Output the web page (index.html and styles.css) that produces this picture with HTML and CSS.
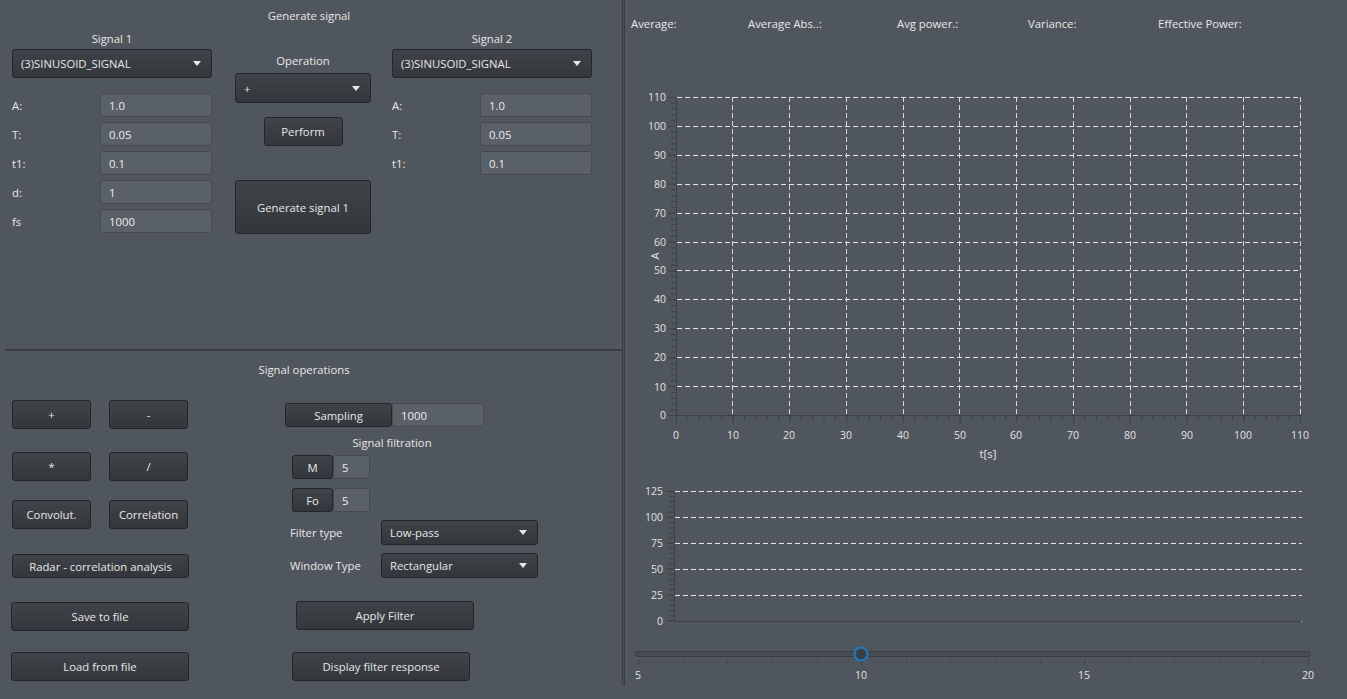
FILE: index.html
```html
<!DOCTYPE html>
<html>
<head>
<meta charset="utf-8">
<link rel="stylesheet" href="styles.css">
</head>
<body>
<div class="app">
  <div class="left">
    <section class="gen">
      <div class="title gen-title">Generate signal</div>
      <div class="gen-cols">
        <div class="sigcol">
          <div class="collabel">Signal 1</div>
          <div class="combo sigcombo"><span>(3)SINUSOID_SIGNAL</span><i class="arrow"></i></div>
          <div class="params">
            <div class="param"><span class="plabel">A:</span><div class="field">1.0</div></div>
            <div class="param"><span class="plabel">T:</span><div class="field">0.05</div></div>
            <div class="param"><span class="plabel">t1:</span><div class="field">0.1</div></div>
            <div class="param"><span class="plabel">d:</span><div class="field">1</div></div>
            <div class="param"><span class="plabel">fs</span><div class="field">1000</div></div>
          </div>
        </div>
        <div class="opcol">
          <div class="collabel oplabel">Operation</div>
          <div class="combo opcombo"><span>+</span><i class="arrow"></i></div>
          <div class="btn perform">Perform</div>
          <div class="btn generate">Generate signal 1</div>
        </div>
        <div class="sigcol sig2">
          <div class="collabel">Signal 2</div>
          <div class="combo sigcombo"><span>(3)SINUSOID_SIGNAL</span><i class="arrow"></i></div>
          <div class="params">
            <div class="param"><span class="plabel">A:</span><div class="field">1.0</div></div>
            <div class="param"><span class="plabel">T:</span><div class="field">0.05</div></div>
            <div class="param"><span class="plabel">t1:</span><div class="field">0.1</div></div>
          </div>
        </div>
      </div>
    </section>
    <div class="hr"></div>
    <section class="ops">
      <div class="title ops-title">Signal operations</div>
      <div class="ops-cols">
        <div class="opsleft">
          <div class="pair r1"><div class="btn small">+</div><div class="btn small">-</div></div>
          <div class="pair r2"><div class="btn small">*</div><div class="btn small">/</div></div>
          <div class="pair r3"><div class="btn small">Convolut.</div><div class="btn small">Correlation</div></div>
          <div class="btn radar">Radar - correlation analysis</div>
          <div class="btn file save">Save to file</div>
          <div class="btn file load">Load from file</div>
        </div>
        <div class="opsright">
          <div class="samp"><div class="btn sampbtn">Sampling</div><div class="field sampfield">1000</div></div>
          <div class="filt-title">Signal filtration</div>
          <div class="mrow mrow1"><div class="btn mbtn">M</div><div class="field mfield">5</div></div>
          <div class="mrow mrow2"><div class="btn mbtn">Fo</div><div class="field mfield">5</div></div>
          <div class="ftrow ft1"><span class="ftlabel">Filter type</span><div class="combo ftcombo"><span>Low-pass</span><i class="arrow"></i></div></div>
          <div class="ftrow ft2"><span class="ftlabel">Window Type</span><div class="combo ftcombo"><span>Rectangular</span><i class="arrow"></i></div></div>
          <div class="btn apply">Apply Filter</div>
          <div class="btn display">Display filter response</div>
        </div>
      </div>
    </section>
  </div>
  <div class="divider"></div>
  <div class="right">
    <div class="stats">
      <span>Average:</span>
      <span>Average Abs..:</span>
      <span>Avg power.:</span>
      <span>Variance:</span>
      <span>Effective Power:</span>
    </div>
    <svg class="charts" width="722" height="636" viewBox="625 50 722 636" xmlns="http://www.w3.org/2000/svg">
      <!-- chart 1 grid -->
      <g class="grid">
        <path d="M677 97.5H1301M677 126.5H1301M677 155.5H1301M677 184.5H1301M677 213.5H1301M677 242.5H1301M677 270.5H1301M677 299.5H1301M677 328.5H1301M677 357.5H1301M677 386.5H1301"/>
        <path class="vgrid" d="M732.5 97V415M789.5 97V415M846.5 97V415M903.5 97V415M959.5 97V415M1016.5 97V415M1073.5 97V415M1130.5 97V415M1186.5 97V415M1243.5 97V415M1300.5 97V415"/>
      </g>
      <g class="axis">
        <path d="M676.5 97V416M676 415.5H1301"/>
        <line x1="672" y1="97" x2="672" y2="417" stroke-width="8" stroke-dasharray="1 27.909"/>
        <line x1="673.5" y1="97" x2="673.5" y2="417" stroke-width="5" stroke-dasharray="1 4.782"/>
        <line x1="676" y1="419" x2="1302" y2="419" stroke-width="8" stroke-dasharray="1 55.727"/>
        <line x1="676" y1="417.5" x2="1302" y2="417.5" stroke-width="5" stroke-dasharray="1 10.345"/>
      </g>
      <g class="ticklabels ylab">
        <text x="666" y="101">110</text>
        <text x="666" y="130">100</text>
        <text x="666" y="159">90</text>
        <text x="666" y="188">80</text>
        <text x="666" y="217">70</text>
        <text x="666" y="246">60</text>
        <text x="666" y="274">50</text>
        <text x="666" y="303">40</text>
        <text x="666" y="332">30</text>
        <text x="666" y="361">20</text>
        <text x="666" y="391">10</text>
        <text x="666" y="419">0</text>
      </g>
      <g class="ticklabels xlab">
        <text x="676" y="439">0</text>
        <text x="733" y="439">10</text>
        <text x="789" y="439">20</text>
        <text x="846" y="439">30</text>
        <text x="903" y="439">40</text>
        <text x="960" y="439">50</text>
        <text x="1016" y="439">60</text>
        <text x="1073" y="439">70</text>
        <text x="1130" y="439">80</text>
        <text x="1187" y="439">90</text>
        <text x="1243" y="439">100</text>
        <text x="1300" y="439">110</text>
      </g>
      <text class="axtitle" x="988" y="458">t[s]</text>
      <text class="axtitle" x="659" y="256" transform="rotate(-90 659 256)">A</text>

      <!-- chart 2 -->
      <g class="grid">
        <path d="M675 491.5H1302M675 517.5H1302M675 543.5H1302M675 569.5H1302M675 595.5H1302"/>
      </g>
      <g class="axis">
        <path d="M674.5 491V622M674 621.5H1301"/>
        <line x1="670" y1="491" x2="670" y2="623" stroke-width="8" stroke-dasharray="1 24.87"/>
        <line x1="671.5" y1="491" x2="671.5" y2="623" stroke-width="5" stroke-dasharray="1 4.174"/>
      </g>
      <rect x="1301" y="621" width="1" height="1" fill="#c8c8c8"/>
      <g class="ticklabels ylab">
        <text x="663" y="495">125</text>
        <text x="663" y="521">100</text>
        <text x="663" y="547">75</text>
        <text x="663" y="573">50</text>
        <text x="663" y="599">25</text>
        <text x="663" y="625">0</text>
      </g>

      <!-- slider -->
      <rect class="track" x="635.5" y="651.5" width="675" height="5" rx="2.5"/>
      <g class="axis">
        <path d="M638.5 659V665M861.5 659V665M1084.5 659V665M1308.5 659V665"/>
        <path d="M683.5 660V663M727.5 660V663M772.5 660V663M817.5 660V663M906.5 660V663M950.5 660V663M995.5 660V663M1040.5 660V663M1129.5 660V663M1174.5 660V663M1219.5 660V663M1263.5 660V663"/>
      </g>
      <circle class="thumb" cx="861" cy="654" r="6.5"/>
      <g class="ticklabels xlab">
        <text x="638" y="679">5</text>
        <text x="861" y="679">10</text>
        <text x="1084" y="679">15</text>
        <text x="1308" y="679">20</text>
      </g>
    </svg>
  </div>
</div>
</body>
</html>
```
FILE: styles.css
```css
* { box-sizing: border-box; margin: 0; padding: 0; }
body {
  margin: 0;
  background: #50565d;
  font-family: "Open Sans", "Noto Sans", sans-serif;
  font-size: 11.3px;
  color: #e8e8e8;
  width: 1347px;
  height: 699px;
  overflow: hidden;
}
.app { display: flex; height: 686px; }
.left { width: 622px; display: flex; flex-direction: column; }
.divider {
  width: 3px;
  border-left: 1px solid #3a3e43;
  border-right: 1px solid #3a3e43;
  background: #4b5056;
}
.right { width: 722px; display: flex; flex-direction: column; }

.title { line-height: 16px; text-align: center; }
.gen { height: 349px; }
.gen-title { padding-top: 8px; padding-right: 4px; }
.gen-cols { display: flex; margin-top: 7px; padding-left: 12px; }
.sigcol { width: 200px; display: flex; flex-direction: column; }
.sig2 { margin-left: 21px; }
.collabel { line-height: 16px; text-align: center; }
.opcol { width: 136px; margin-left: 23px; display: flex; flex-direction: column; }
.oplabel { margin-top: 22px; }

.btn {
  display: flex; align-items: center; justify-content: center;
  background: linear-gradient(#3f4449, #33373c);
  border: 1px solid #222529;
  border-radius: 3px;
  color: #e8e8e8;
  white-space: nowrap;
}
.combo {
  display: flex; align-items: center;
  background: linear-gradient(#3f4449, #33373c);
  border: 1px solid #222529;
  border-radius: 3px;
  padding: 0 8px 0 8px;
  white-space: nowrap;
}
.combo span { flex: 1; }
.arrow {
  width: 0; height: 0;
  border-left: 4px solid transparent;
  border-right: 4px solid transparent;
  border-top: 5px solid #e8e8e8;
  margin-right: 2px;
}
.field {
  display: flex; align-items: center;
  background: #5a6067;
  border: 1px solid #454a50;
  border-radius: 3px;
  padding-left: 8px;
  color: #ececec;
}
.sigcombo { margin-top: 2px; height: 29px; }
.params { margin-top: 15px; display: flex; flex-direction: column; gap: 5px; }
.param { display: flex; align-items: center; height: 24px; }
.plabel { width: 88px; }
.param .field { width: 112px; height: 24px; }
.opcombo { margin-top: 4px; height: 30px; }
.perform { margin-top: 14px; height: 29px; width: 79px; align-self: center; }
.generate { margin-top: 34px; height: 54px; }

.hr { height: 2px; background: #3a3e42; margin-left: 5px; }

.ops { flex: 1; }
.ops-title { padding-top: 11px; padding-right: 14px; }
.ops-cols { display: flex; }
.opsleft { margin-left: 11px; width: 179px; display: flex; flex-direction: column; }
.pair { display: flex; gap: 18px; margin-left: 1px; }
.pair .btn { width: 79px; height: 29px; }
.r1 { margin-top: 22px; }
.r2 { margin-top: 23px; }
.r3 { margin-top: 19px; }
.radar { margin-top: 25px; margin-left: 1px; width: 177px; height: 24px; }
.file { width: 178px; height: 29px; }
.save { margin-top: 24px; }
.load { margin-top: 21px; }

.opsright { margin-left: 95px; width: 260px; display: flex; flex-direction: column; }
.samp { display: flex; margin-top: 25px; height: 24px; }
.sampbtn { width: 107px; }
.sampfield { width: 92px; }
.filt-title { margin-top: 8px; line-height: 16px; width: 214px; text-align: center; }
.mrow { display: flex; height: 24px; margin-left: 7px; }
.mrow1 { margin-top: 4px; }
.mrow2 { margin-top: 9px; }
.mbtn { width: 41px; }
.mfield { width: 37px; }
.ftrow { display: flex; align-items: center; margin-left: 5px; }
.ft1 { margin-top: 8px; }
.ft2 { margin-top: 8px; }
.ftlabel { width: 91px; }
.ftcombo { width: 157px; height: 25px; }
.apply { margin-top: 23px; margin-left: 11px; width: 178px; height: 29px; }
.display { margin-top: 22px; margin-left: 7px; width: 178px; height: 29px; }

.stats {
  display: grid;
  grid-template-columns: 117px 149px 131px 130px auto;
  padding: 16px 0 0 6px;
  height: 50px;
  line-height: 16px;
}
.charts { display: block; }
.grid path { fill: none; stroke: #e6e6e6; stroke-width: 1; stroke-dasharray: 5 3; }
.grid path.vgrid { stroke: #d8d8d8; }
.axis path, .axis line { fill: none; stroke: #3d4247; }
.axis path { stroke-width: 1; }
.ticklabels text { font-family: "Open Sans", "Noto Sans", sans-serif; font-size: 10.5px; fill: #e2e2e2; }
.ylab text { text-anchor: end; }
.xlab text { text-anchor: middle; }
.axtitle { font-family: "Open Sans", "Noto Sans", sans-serif; font-size: 11.3px; fill: #e8e8e8; text-anchor: middle; }
.track { fill: #474c52; stroke: #383c41; stroke-width: 1; }
.thumb { fill: #3a3f45; stroke: #1f7bc6; stroke-width: 2; }
```
